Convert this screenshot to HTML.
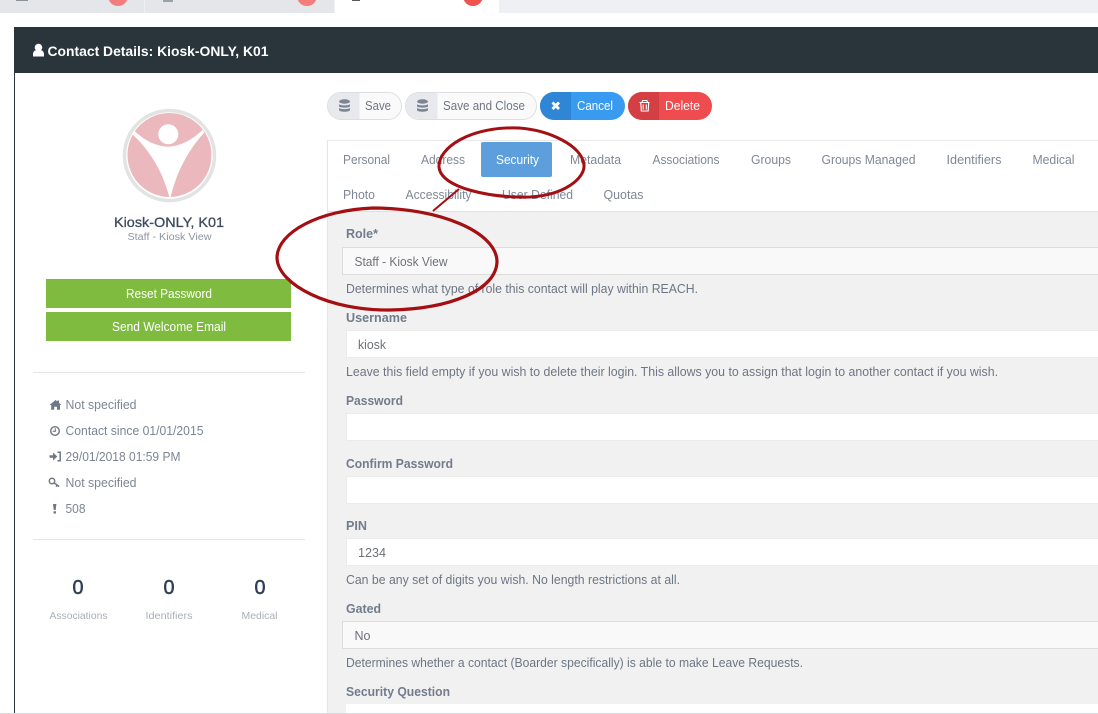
<!DOCTYPE html>
<html><head><meta charset="utf-8"><title>Contact Details</title>
<style>
html,body{margin:0;padding:0;background:#fff;width:1098px;height:714px;overflow:hidden}
svg{display:block}
text{font-family:"Liberation Sans",sans-serif;font-size:12.5px;fill:#7c8595}
.n{fill:#7f8896}
.l{font-weight:bold;fill:#727c8c;font-size:12.5px}
.h{fill:#6d7684}
.v{fill:#6e7278}
.s{fill:#a9afb8;font-size:10.5px}
.b{fill:#fff}
.z{font-size:20px;fill:#2f3f56;stroke:#2f3f56;stroke-width:.5px}
</style></head><body>
<svg width="1098" height="714" viewBox="0 0 1098 714" xmlns="http://www.w3.org/2000/svg">
<rect width="1098" height="714" fill="#fff"/>
<!-- browser tabs -->
<rect x="0" y="0" width="1098" height="13" fill="#eef0f4"/>
<rect x="0" y="0" width="144" height="13" fill="#e4e6ea"/>
<rect x="145" y="0" width="189" height="13" fill="#e4e6ea"/>
<rect x="335" y="0" width="164" height="13" fill="#fff"/>
<circle cx="118" cy="-4" r="10" fill="#f47c7c"/>
<circle cx="307" cy="-4" r="10" fill="#f47c7c"/>
<circle cx="473" cy="-4" r="10" fill="#ef5350"/>
<rect x="16" y="0" width="12" height="1" fill="#8a929c"/>
<rect x="163" y="0" width="10" height="2" fill="#9a9fa8"/>
<rect x="352" y="0" width="8" height="1" fill="#555c66"/>
<!-- header -->
<rect x="14" y="27" width="1084" height="46" fill="#29343b"/>
<rect x="14" y="73" width="1" height="641" fill="#29343b"/>
<circle cx="38.500" cy="47.500" r="3.800" fill="#fff"/>
<path d="M33 56.500v-2.300c0-2.500 1.500-4 3.200-4l2.300 1 2.300-1c1.700 0 3.200 1.500 3.200 4v2.300z" fill="#fff"/>
<text x="47.500" y="56" textLength="221" lengthAdjust="spacingAndGlyphs" style="font-weight:bold;font-size:14px;fill:#fff">Contact Details: Kiosk-ONLY, K01</text>
<!-- avatar -->
<circle cx="169.500" cy="155.500" r="45" fill="#fff" stroke="#e2e3e3" stroke-width="3.500"/>
<circle cx="169.500" cy="155" r="42" fill="#ebb9bd"/>
<path d="M134 130.500 Q150 146 168 146.700 Q186 146 203 129.500 L204 133 Q188 150 177.500 175 Q172 190 170.700 197 L169.300 197 Q167 188 161.700 175 Q150 150 132 134 Z" fill="#fff"/>
<circle cx="168.300" cy="134.300" r="10" fill="#fff"/>
<text x="114" y="227" textLength="110" lengthAdjust="spacingAndGlyphs" style="font-size:14px;fill:#3e4a5c;stroke:#3e4a5c;stroke-width:.3px">Kiosk-ONLY, K01</text>
<text x="127.500" y="240" textLength="84" lengthAdjust="spacingAndGlyphs" style="font-size:10.500px;fill:#8d95a1">Staff - Kiosk View</text>
<!-- green buttons -->
<rect x="46" y="279" width="245" height="29" fill="#7fbb3f"/>
<text class="b" x="126" y="298" textLength="86" lengthAdjust="spacingAndGlyphs">Reset Password</text>
<rect x="46" y="312" width="245" height="29" fill="#7fbb3f"/>
<text class="b" x="112" y="331" textLength="114" lengthAdjust="spacingAndGlyphs">Send Welcome Email</text>
<rect x="33" y="372" width="272" height="1" fill="#e4e5e6"/>
<!-- info list -->
<path d="M49.500 405l6-5 1.800 1.500v-1h1.700v2.500l2.500 2h-1.500v4.800h-3v-3h-2.800v3h-3v-4.800z" fill="#6f7887"/>
<text x="65.500" y="409" textLength="71" lengthAdjust="spacingAndGlyphs">Not specified</text>
<circle cx="55" cy="431" r="4.300" fill="none" stroke="#6f7887" stroke-width="1.400"/>
<path d="M55.300 428.300v3h-2.600" fill="none" stroke="#6f7887" stroke-width="1.100"/>
<text x="65.500" y="435" textLength="138" lengthAdjust="spacingAndGlyphs">Contact since 01/01/2015</text>
<path d="M49.500 455.300h3.500v-2.800l4.300 4-4.300 4v-2.800h-3.500z" fill="#6f7887"/>
<path d="M57.500 452.300h2.700v8.400h-2.700" fill="none" stroke="#6f7887" stroke-width="1.500"/>
<text x="65.500" y="461" textLength="115" lengthAdjust="spacingAndGlyphs">29/01/2018 01:59 PM</text>
<circle cx="52" cy="481" r="2.700" fill="none" stroke="#6f7887" stroke-width="1.500"/>
<path d="M54.200 483l5 3.500M57.200 485l-1 1.700" fill="none" stroke="#6f7887" stroke-width="1.500"/>
<text x="65.500" y="487" textLength="71" lengthAdjust="spacingAndGlyphs">Not specified</text>
<path d="M53 504h3.400l-.7 6h-2zM53.500 511.200h2.500v2.300h-2.500z" fill="#6f7887"/>
<text x="65.500" y="513" textLength="20" lengthAdjust="spacingAndGlyphs">508</text>
<rect x="33" y="539" width="272" height="1" fill="#e4e5e6"/>
<!-- stats -->
<text class="z" x="72.500" y="594" textLength="11" lengthAdjust="spacingAndGlyphs">0</text>
<text class="z" x="163.500" y="594" textLength="11" lengthAdjust="spacingAndGlyphs">0</text>
<text class="z" x="254.500" y="594" textLength="11" lengthAdjust="spacingAndGlyphs">0</text>
<text class="s" x="49.500" y="619" textLength="58" lengthAdjust="spacingAndGlyphs">Associations</text>
<text class="s" x="145.500" y="619" textLength="47" lengthAdjust="spacingAndGlyphs">Identifiers</text>
<text class="s" x="241.500" y="619" textLength="36" lengthAdjust="spacingAndGlyphs">Medical</text>
<!-- action buttons -->
<rect x="327.500" y="92.500" width="74" height="27" rx="13.500" fill="#fafafa" stroke="#dcdfe2"/>
<path d="M340 93h19.500v26H340a13 13 0 0 1-12-13a13 13 0 0 1 12-13z" fill="#e7e9ec"/>
<g fill="#7c8594"><ellipse cx="344.500" cy="101.500" rx="5.500" ry="2.200"/><path d="M339 104.300c1.500 1.500 9.500 1.500 11 0v2.200c-1.500 1.500-9.500 1.500-11 0zM339 108c1.500 1.500 9.500 1.500 11 0v2.200c-1 2-10 2-11 0z"/></g>
<text class="h" x="365" y="110" textLength="26" lengthAdjust="spacingAndGlyphs">Save</text>
<rect x="405.500" y="92.500" width="131" height="27" rx="13.500" fill="#fafafa" stroke="#dcdfe2"/>
<path d="M418 93h19.500v26H418a13 13 0 0 1-12-13a13 13 0 0 1 12-13z" fill="#e7e9ec"/>
<g fill="#7c8594"><ellipse cx="422.500" cy="101.500" rx="5.500" ry="2.200"/><path d="M417 104.300c1.500 1.500 9.500 1.500 11 0v2.200c-1.500 1.500-9.500 1.500-11 0zM417 108c1.500 1.500 9.500 1.500 11 0v2.200c-1 2-10 2-11 0z"/></g>
<text class="h" x="443" y="110" textLength="82" lengthAdjust="spacingAndGlyphs">Save and Close</text>
<rect x="540" y="92" width="85" height="28" rx="14" fill="#399bef"/>
<path d="M554 92h17v28h-17a14 14 0 0 1-14-14a14 14 0 0 1 14-14z" fill="#2f86d4"/>
<path d="M552.500 102.500l6.500 6.500M559 102.500l-6.500 6.500" stroke="#fff" stroke-width="2.800"/>
<text class="b" x="577" y="110" textLength="36" lengthAdjust="spacingAndGlyphs">Cancel</text>
<rect x="628" y="92" width="84" height="28" rx="14" fill="#ef4c4f"/>
<path d="M642 92h17v28h-17a14 14 0 0 1-14-14a14 14 0 0 1 14-14z" fill="#d33f43"/>
<path d="M639.500 102.500h10M642 102.500l.6-2h4.300l.6 2M640.800 102.500l.5 8.500h6.900l.5-8.500M643.200 104.500v5M646.300 104.500v5" fill="none" stroke="#fff" stroke-width="1.100"/>
<text class="b" x="665" y="110" textLength="35" lengthAdjust="spacingAndGlyphs">Delete</text>
<!-- tabs panel -->
<rect x="327" y="140" width="771" height="1" fill="#e8e9ea"/>
<rect x="327" y="140" width="1" height="574" fill="#e4e5e6"/>
<rect x="328" y="212" width="770" height="502" fill="#f1f1f1"/>
<rect x="328" y="211" width="770" height="1" fill="#dfe0e1"/>
<rect x="481" y="142" width="71" height="35" rx="2" fill="#5c9fdc"/>
<g>
<text class="n" x="343" y="164" textLength="47" lengthAdjust="spacingAndGlyphs">Personal</text>
<text class="n" x="421" y="164" textLength="44" lengthAdjust="spacingAndGlyphs">Address</text>
<text class="b" x="496" y="164" textLength="43" lengthAdjust="spacingAndGlyphs">Security</text>
<text class="n" x="570" y="164" textLength="51" lengthAdjust="spacingAndGlyphs">Metadata</text>
<text class="n" x="652.500" y="164" textLength="67" lengthAdjust="spacingAndGlyphs">Associations</text>
<text class="n" x="751" y="164" textLength="40" lengthAdjust="spacingAndGlyphs">Groups</text>
<text class="n" x="821.500" y="164" textLength="94" lengthAdjust="spacingAndGlyphs">Groups Managed</text>
<text class="n" x="946.500" y="164" textLength="55" lengthAdjust="spacingAndGlyphs">Identifiers</text>
<text class="n" x="1032.500" y="164" textLength="42" lengthAdjust="spacingAndGlyphs">Medical</text>
<text class="n" x="343" y="199" textLength="32" lengthAdjust="spacingAndGlyphs">Photo</text>
<text class="n" x="405.500" y="199" textLength="66" lengthAdjust="spacingAndGlyphs">Accessibility</text>
<text class="n" x="502" y="199" textLength="71" lengthAdjust="spacingAndGlyphs">User Defined</text>
<text class="n" x="603.500" y="199" textLength="40" lengthAdjust="spacingAndGlyphs">Quotas</text>
</g>
<!-- form -->
<text class="l" x="346" y="238" textLength="32" lengthAdjust="spacingAndGlyphs">Role*</text>
<rect x="342.500" y="247.500" width="760" height="27" fill="#f9f9f9" stroke="#dcdcdc"/>
<text class="v" x="354.500" y="266" textLength="93" lengthAdjust="spacingAndGlyphs">Staff - Kiosk View</text>
<text x="346" y="293" textLength="352" lengthAdjust="spacingAndGlyphs" class="h">Determines what type of role this contact will play within REACH.</text>
<text class="l" x="346" y="322" textLength="61" lengthAdjust="spacingAndGlyphs">Username</text>
<rect x="346.500" y="330.500" width="760" height="27" fill="#fff" stroke="#ebebeb"/>
<text class="v" x="358" y="349" textLength="28" lengthAdjust="spacingAndGlyphs">kiosk</text>
<text class="h" x="346" y="376" textLength="652" lengthAdjust="spacingAndGlyphs">Leave this field empty if you wish to delete their login. This allows you to assign that login to another contact if you wish.</text>
<text class="l" x="346" y="405" textLength="57" lengthAdjust="spacingAndGlyphs">Password</text>
<rect x="346.500" y="413.500" width="760" height="27" fill="#fff" stroke="#ebebeb"/>
<text class="l" x="346" y="468" textLength="107" lengthAdjust="spacingAndGlyphs">Confirm Password</text>
<rect x="346.500" y="476.500" width="760" height="27" fill="#fff" stroke="#ebebeb"/>
<text class="l" x="346" y="530" textLength="21" lengthAdjust="spacingAndGlyphs">PIN</text>
<rect x="346.500" y="538.500" width="760" height="27" fill="#fff" stroke="#ebebeb"/>
<text class="v" x="358" y="557" textLength="28" lengthAdjust="spacingAndGlyphs">1234</text>
<text class="h" x="346" y="584" textLength="334" lengthAdjust="spacingAndGlyphs">Can be any set of digits you wish. No length restrictions at all.</text>
<text class="l" x="346" y="613" textLength="35" lengthAdjust="spacingAndGlyphs">Gated</text>
<rect x="342.500" y="621.500" width="760" height="27" fill="#f9f9f9" stroke="#dcdcdc"/>
<text class="v" x="354.500" y="640" textLength="16" lengthAdjust="spacingAndGlyphs">No</text>
<text class="h" x="346" y="667" textLength="457" lengthAdjust="spacingAndGlyphs">Determines whether a contact (Boarder specifically) is able to make Leave Requests.</text>
<text class="l" x="346" y="696" textLength="104" lengthAdjust="spacingAndGlyphs">Security Question</text>
<rect x="346" y="704" width="752" height="10" fill="#fff"/>
<rect x="0" y="713" width="1098" height="1" fill="#d9dadb"/>
<!-- annotations -->
<g fill="none" stroke="#a30f12">
<path d="M519 128C470 126 438 148 439 167C441 188 490 198 530 197C565 195 585 178 584 165C582 145 548 130 519 128Z" stroke-width="3"/>
<path d="M373 208C320 210 277 232 277 258C278 285 330 311 390 310C450 309 497 290 497 261C496 232 440 208 373 208Z" stroke-width="3.200"/>
<path d="M459 189L433 211" stroke-width="2"/>
</g>
</svg>
</body></html>
